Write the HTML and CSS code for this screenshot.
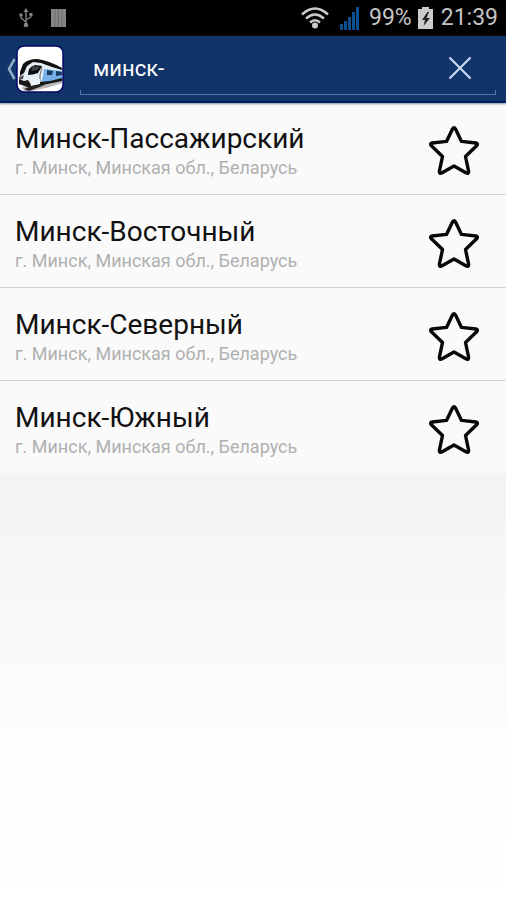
FILE: index.html
```html
<!DOCTYPE html>
<html lang="ru">
<head>
<meta charset="utf-8">
<meta name="viewport" content="width=device-width, initial-scale=1">
<title>Выбор станции</title>
<link rel="stylesheet" href="styles.css">
</head>
<body>
<svg class="symbols" aria-hidden="true">
  <symbol id="star" viewBox="0 0 50 50">
    <path d="M23.6 2.8Q25 .6 26.4 2.8L32.5 15.4L46.8 17Q49.6 17.6 47.6 19.8L36.5 30.5L39.6 45.2Q39.8 48 37.3 47L25 40L12.7 47Q10.2 48 10.4 45.2L13.5 30.5L2.4 19.8Q.4 17.6 3.2 17L17.5 15.4Z" fill="none" stroke="#080808" stroke-width="3.4" stroke-linejoin="round"/>
  </symbol>
</svg>
<div class="status">
  <svg class="usb" viewBox="0 0 14 20" aria-hidden="true">
    <path d="M7 3V16M2 7V10L7 14M12 7V9L7 12" fill="none" stroke="#858585" stroke-width="1.3"/>
    <path d="M7 0L9.500 4H4.500Z" fill="#858585"/>
    <circle cx="7" cy="17" r="2.3" fill="#858585"/>
    <circle cx="2" cy="7" r="1.7" fill="#858585"/>
    <path d="M10.500 5h3v3h-3z" fill="#858585"/>
  </svg>
  <svg class="bars" viewBox="0 0 15 18" aria-hidden="true">
    <path d="M0 0h15v18H0z" fill="#858585"/>
    <path d="M4 0v18M7.500 0v18M11 0v18" stroke="#6c6c6c" stroke-width="1"/>
  </svg>
  <svg class="wifi" viewBox="0 0 28 22" aria-hidden="true">
    <path d="M1 7.500Q14-4.500 27 7.500M5 11.500Q14 3.500 23 11.500M9 15.500Q14 11 19 15.500" fill="none" stroke="#cbcbcb" stroke-width="2.500"/>
    <circle cx="14" cy="18.500" r="3" fill="#cbcbcb"/>
  </svg>
  <svg class="signal" viewBox="0 0 19 23" aria-hidden="true">
    <path d="M0 17h3v6H0zM4 14h3v9H4zM8 10h3v13H8zM12 5h3v18h-3zM16 0h3v23h-3z" fill="#0b4f8f"/>
  </svg>
  <span class="percent">99%</span>
  <svg class="battery" viewBox="0 0 15 22" aria-hidden="true">
    <path d="M4 0h7v2h4v20H0V2h4z" fill="#cbcbcb"/>
    <path d="M9.500 5L4 13h3l-1.500 6L12 11H8.500l2.500-6z" fill="#222"/>
  </svg>
  <time class="clock">21:39</time>
</div>
<header class="bar">
  <button class="back" type="button" aria-label="Назад">
    <svg class="chevron" viewBox="0 0 10 22" aria-hidden="true">
      <path d="M8.500 1L3 11L8.500 21" fill="none" stroke="#8faac6" stroke-width="2.600"/>
    </svg>
    <svg class="logo" viewBox="0 0 48 48" aria-hidden="true">
      <rect x="1" y="1" width="46" height="46" rx="7" fill="#fff" stroke="#03076b" stroke-width="1.500"/>
      <path d="M6 42L20 40L46 35V38L34 42L16 46H8z" fill="#b8b8b8"/>
      <path d="M4 28L7 20Q12 15 20 15Q34 17 46 25V36L34 39L16 43L4 38Q2 33 4 28z" fill="#e6eef7"/>
      <path d="M4 27L7 19Q12 14 21 14Q34 16 46 23V25L36 22L25 18L17 17L11 21L8 28L4 31z" fill="#111"/>
      <path d="M12 30Q12 22 19 20L26 21L22 28Q17 30 12 30z" fill="#080808"/>
      <path d="M17 21L24 22L21 25L15 26z" fill="#3c434c"/>
      <path d="M28 24L46 26V36L25 39L27 31z" fill="#75b0e9"/>
      <path d="M31 25L37 26L36 30L31 30zM40 26L46 27V30L40 31z" fill="#173b63"/>
      <path d="M26 22L24 30V38" fill="none" stroke="#666" stroke-width="1"/>
      <path d="M3 34L8 36L12 35L14 38L34 36L46 33V36L32 39L14 43L3 39z" fill="#171717"/>
      <path d="M14 37L24 34V39L15 41z" fill="#eef3f8"/>
      <path d="M8 44L16 41L29 40L13 46z" fill="#222"/>
      <path d="M3 32L8 30L7 34L3 35z" fill="#555"/>
    </svg>
  </button>
  <form class="search">
    <input class="query" type="text" value="минск-" aria-label="Название станции">
    <button class="clear" type="reset" aria-label="Очистить">
      <svg class="cross" viewBox="0 0 24 24" aria-hidden="true">
        <path d="M1.500 1.500L22.500 22.500M22.500 1.500L1.500 22.500" fill="none" stroke="#c9d8ed" stroke-width="2.200"/>
      </svg>
    </button>
  </form>
</header>
<main>
  <ul class="stations">
    <li class="station">
      <div class="info"><h2 class="name">Минск-Пассажирский</h2><p class="place">г. Минск, Минская обл., Беларусь</p></div>
      <button class="favorite" type="button" aria-label="В избранное"><svg class="star"><use href="#star"/></svg></button>
    </li>
    <li class="station">
      <div class="info"><h2 class="name">Минск-Восточный</h2><p class="place">г. Минск, Минская обл., Беларусь</p></div>
      <button class="favorite" type="button" aria-label="В избранное"><svg class="star"><use href="#star"/></svg></button>
    </li>
    <li class="station">
      <div class="info"><h2 class="name">Минск-Северный</h2><p class="place">г. Минск, Минская обл., Беларусь</p></div>
      <button class="favorite" type="button" aria-label="В избранное"><svg class="star"><use href="#star"/></svg></button>
    </li>
    <li class="station">
      <div class="info"><h2 class="name">Минск-Южный</h2><p class="place">г. Минск, Минская обл., Беларусь</p></div>
      <button class="favorite" type="button" aria-label="В избранное"><svg class="star"><use href="#star"/></svg></button>
    </li>
  </ul>
</main>
</body>
</html>
```
FILE: styles.css
```css
* {
  box-sizing: border-box;
}

body {
  margin: 0;
  min-height: 100vh;
  font-family: Roboto, "Noto Sans", sans-serif;
  background: linear-gradient(#f4f4f4 55%, #fdfdfd 83%, #fff);
}

button {
  padding: 0;
  border: 0;
  background: none;
  cursor: pointer;
}

svg {
  display: block;
  flex: none;
}

.symbols {
  position: absolute;
  width: 0;
  height: 0;
}

.status {
  display: flex;
  align-items: center;
  height: 36px;
  padding: 0 8px 0 19px;
  background: #000;
  color: #c4c4c4;
  font-size: 23px;
  line-height: 36px;
}

.usb {
  width: 14px;
  height: 20px;
}

.bars {
  width: 15px;
  height: 18px;
  margin-left: 18px;
}

.wifi {
  width: 28px;
  height: 22px;
  margin-left: auto;
}

.signal {
  width: 19px;
  height: 23px;
  margin-left: 11px;
}

.percent {
  margin-left: 10px;
}

.battery {
  width: 15px;
  height: 22px;
  margin-left: 6px;
}

.clock {
  margin-left: 8px;
}

.bar {
  display: flex;
  align-items: center;
  height: 67px;
  margin-bottom: -1px;
  padding: 0 10px 0 6px;
  background: #113469;
  border-bottom: 2px solid #012064;
  box-shadow: 0 1px 2px #8f929b;
  position: relative;
}

.back {
  display: flex;
  align-items: center;
}

.chevron {
  width: 10px;
  height: 22px;
}

.logo {
  width: 48px;
  height: 48px;
}

.search {
  display: flex;
  flex: 1;
  align-items: center;
  align-self: stretch;
  min-width: 0;
  margin: 0 0 6px 16px;
  padding: 0 24px 0 13px;
  background:
    linear-gradient(#5278a8, #5278a8) bottom / 100% 1px no-repeat,
    linear-gradient(#5278a8, #5278a8) left bottom / 1px 5px no-repeat,
    linear-gradient(#5278a8, #5278a8) right bottom / 1px 5px no-repeat;
}

.query {
  flex: 1;
  min-width: 0;
  height: 40px;
  margin-top: 6px;
  padding: 0;
  border: 0;
  outline: 0;
  background: none;
  color: #fff;
  font: 22px Roboto, "Noto Sans", sans-serif;
}

.clear {
  margin-top: 4px;
}

.cross {
  width: 24px;
  height: 24px;
}

.stations {
  margin: 0;
  padding: 0;
  list-style: none;
}

.station {
  display: flex;
  align-items: center;
  justify-content: space-between;
  padding: 19px 27px 14px 15px;
  background: #fafafa;
}

.station + .station {
  border-top: 1px solid #d4d4d4;
}

.name {
  margin: 0;
  color: #111;
  font-size: 28px;
  font-weight: 400;
  line-height: 35px;
}

.place {
  margin: 0;
  color: #b0b0b0;
  font-size: 18px;
  line-height: 24px;
}

.star {
  width: 50px;
  height: 50px;
}
```
